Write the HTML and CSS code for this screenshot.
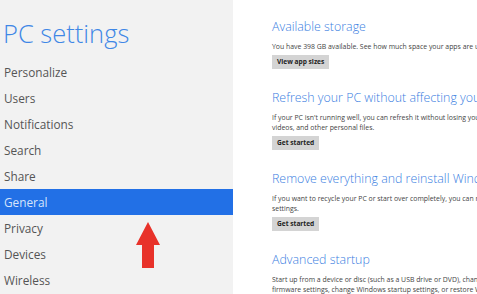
FILE: index.html
```html
<!DOCTYPE html>
<html>
<head>
<meta charset="utf-8" />
<title>PC settings</title>
<link rel="stylesheet" href="styles.css">
</head>
<body>
	<div class="screen">
		<div class="side">
			<h1 class="title">PC settings</h1>
			<ul class="nav">
				<li>Personalize</li>
				<li>Users</li>
				<li>Notifications</li>
				<li>Search</li>
				<li>Share</li>
				<li class="on">General</li>
				<li>Privacy</li>
				<li>Devices</li>
				<li>Wireless</li>
			</ul>
			<svg class="arrow" width="24" height="46" viewBox="0 0 24 46">
				<polygon points="12,0 24,23 18,23 18,46 6,46 6,23 0,23" fill="#e8322a" />
			</svg>
		</div>
		<div class="main">
			<div class="sect">
				<h2>Available storage</h2>
				<p>You have 398 GB available. See how much space your apps are using.</p>
				<a class="btn" href="#">View app sizes</a>
			</div>
			<div class="sect">
				<h2>Refresh your PC without affecting your files</h2>
				<p>If your PC isn't running well, you can refresh it without losing your photos, music,<br>videos, and other personal files.</p>
				<a class="btn" href="#">Get started</a>
			</div>
			<div class="sect">
				<h2>Remove everything and reinstall Windows</h2>
				<p>If you want to recycle your PC or start over completely, you can reset it to its factory<br>settings.</p>
				<a class="btn" href="#">Get started</a>
			</div>
			<div class="sect">
				<h2>Advanced startup</h2>
				<p>Start up from a device or disc (such as a USB drive or DVD), change your PC's<br>firmware settings, change Windows startup settings, or restore Windows from a system image.</p>
			</div>
		</div>
	</div>
</body>
</html>
```

FILE: styles.css
```css
*{margin: 0;padding: 0;}
html,body{height: 100%;overflow: hidden;}
body{background-color: #fff;font-family: "Open Sans", "Noto Sans", sans-serif;}

.screen{display: flex;height: 294px;}

.side{width: 233px;flex: none;background-color: #f2f2f2;position: relative;}
.title{height: 59px;box-sizing: border-box;padding: 16px 0 0 3px;font-size: 25.5px;font-weight: 300;color: #3f87e6;line-height: 34px;}
.nav{list-style: none;}
.nav li{height: 26px;line-height: 26px;padding-left: 4px;font-size: 11.8px;color: #555;}
.nav li.on{background-color: #2270e6;color: #d6e4fb;}
.arrow{position: absolute;left: 136px;top: 222px;}

.main{flex: 1;padding: 18px 0 0 39px;overflow: hidden;white-space: nowrap;}
.sect{margin-bottom: 20px;}
.sect h2{font-size: 12.4px;font-weight: 300;color: #3b80df;line-height: 18px;}
.sect p{margin-top: 6px;font-size: 6.9px;line-height: 10px;color: #444;}
.btn,.btn:visited{display: block;width: max-content;margin-top: 3px;padding: 0 5px;height: 14px;line-height: 14px;background-color: #d4d4d4;color: #222;font-size: 6.6px;font-weight: 700;text-decoration: none;}
```
